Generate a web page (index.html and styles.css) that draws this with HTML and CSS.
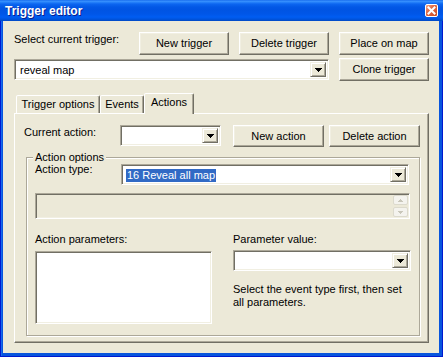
FILE: index.html
```html
<!DOCTYPE html>
<html>
<head>
<meta charset="utf-8">
<link rel="stylesheet" href="styles.css">
</head>
<body>
<div class="window">
  <div class="titlebar">
    <span class="title">Trigger editor</span>
    <span class="close"><svg width="11" height="11" viewBox="0 0 11 11"><path d="M2.5 2.5 L8.5 8.5 M8.5 2.5 L2.5 8.5" stroke="#fff" stroke-width="2" stroke-linecap="square"/></svg></span>
  </div>
  <div class="client">
    <div class="row row-top">
      <span class="label lbl-select">Select current trigger:</span>
      <button class="btn">New trigger</button>
      <button class="btn gap10">Delete trigger</button>
      <button class="btn gap10">Place on map</button>
    </div>
    <div class="row row-second">
      <div class="combo combo-trigger">
        <span class="combo-text">reveal map</span>
        <span class="drop"><svg width="7" height="4" viewBox="0 0 7 4"><path d="M0 0h7v1H0z M1 1h5v1H1z M2 2h3v1H2z M3 3h1v1H3z" fill="#000"/></svg></span>
      </div>
      <button class="btn gap10">Clone trigger</button>
    </div>
    <div class="tabs">
      <div class="tab tab-options">Trigger options</div>
      <div class="tab tab-events">Events</div>
      <div class="tab tab-actions active">Actions</div>
    </div>
    <div class="panel">
      <div class="row row-action">
        <span class="label lbl-current">Current action:</span>
        <div class="combo combo-action">
          <span class="combo-text"></span>
          <span class="drop"><svg width="7" height="4" viewBox="0 0 7 4"><path d="M0 0h7v1H0z M1 1h5v1H1z M2 2h3v1H2z M3 3h1v1H3z" fill="#000"/></svg></span>
        </div>
        <button class="btn btn-new-action">New action</button>
        <button class="btn btn-del-action">Delete action</button>
      </div>
      <fieldset class="group">
        <legend>Action options</legend>
        <div class="row row-type">
          <span class="label lbl-type">Action type:</span>
          <div class="combo combo-type">
            <span class="combo-text"><span class="sel">16 Reveal all map</span></span>
            <span class="drop"><svg width="7" height="4" viewBox="0 0 7 4"><path d="M0 0h7v1H0z M1 1h5v1H1z M2 2h3v1H2z M3 3h1v1H3z" fill="#000"/></svg></span>
          </div>
        </div>
        <div class="edit-disabled">
          <div class="spin">
            <span class="spin-btn"><svg width="5" height="3" viewBox="0 0 5 3"><path d="M2 0h1v1H2z M1 1h3v1H1z M0 2h5v1H0z" fill="#C9C7BA"/></svg></span>
            <span class="spin-btn"><svg width="5" height="3" viewBox="0 0 5 3"><path d="M0 0h5v1H0z M1 1h3v1H1z M2 2h1v1H2z" fill="#C9C7BA"/></svg></span>
          </div>
        </div>
        <div class="params">
          <div class="col col-left">
            <span class="label">Action parameters:</span>
            <div class="listbox"></div>
          </div>
          <div class="col col-right">
            <span class="label">Parameter value:</span>
            <div class="combo combo-value">
              <span class="combo-text"></span>
              <span class="drop"><svg width="7" height="4" viewBox="0 0 7 4"><path d="M0 0h7v1H0z M1 1h5v1H1z M2 2h3v1H2z M3 3h1v1H3z" fill="#000"/></svg></span>
            </div>
            <p class="hint">Select the event type first, then set all parameters.</p>
          </div>
        </div>
      </fieldset>
    </div>
  </div>
</div>
</body>
</html>
```
FILE: styles.css
```css
html, body {
  margin: 0;
  padding: 0;
  background: #ffffff;
}

.window {
  width: 443px;
  height: 357px;
  box-sizing: border-box;
  display: flex;
  flex-direction: column;
  background: #0855DD;
  box-shadow: inset 1px 0 #0019CF, inset -1px 0 #0019CF, inset 0 -1px #0019CF, inset 2px 0 #166AEE, inset -2px 0 #0855DD;
  font-family: "Liberation Sans", Arial, sans-serif;
  font-size: 11px;
  line-height: 13px;
  color: #000;
}

.titlebar {
  flex: none;
  height: 21px;
  box-sizing: border-box;
  display: flex;
  align-items: center;
  padding: 0 5px 0 5px;
  background: linear-gradient(to bottom, #0A5FE8 0px, #3D95FF 1px, #2A86FB 2px, #0C66F0 4px, #0258E6 7px, #0054E3 10px, #0056E8 14px, #005DF2 17px, #0055E0 19px, #0048C4 21px);
}

.title {
  flex: 1;
  color: #fff;
  font-weight: bold;
  font-size: 12px;
  line-height: 14px;
  padding-top: 1px;
  text-shadow: 1px 1px #0A1C8F;
}

.close {
  width: 13px;
  height: 13px;
  box-sizing: border-box;
  border: 1px solid #fff;
  border-radius: 2px;
  background: linear-gradient(135deg, #F0A58A 0%, #E06A45 40%, #CC4A22 100%);
  display: flex;
  align-items: center;
  justify-content: center;
}

.close svg {
  display: block;
}

.client {
  flex: 1;
  margin: 0 4px 4px 3px;
  background: #ECE9D8;
  padding: 11px 0 0 11px;
}

.row {
  display: flex;
  align-items: flex-start;
}

.label {
  display: block;
  white-space: nowrap;
}

.lbl-select {
  width: 125px;
  padding-top: 1px;
}

.btn {
  width: 90px;
  height: 23px;
  box-sizing: border-box;
  margin: 0;
  padding: 0;
  background: #ECE9D8;
  border: 1px solid;
  border-color: #FFFFFF #716F64 #716F64 #FFFFFF;
  box-shadow: inset -1px -1px #ACA899, inset 1px 1px #F1EFE2;
  font-family: inherit;
  font-size: 11px;
  line-height: 13px;
  color: #000;
}

.gap10 {
  margin-left: 10px;
}

.row-second {
  margin-top: 3px;
  align-items: center;
}

.combo {
  display: flex;
  height: 21px;
  box-sizing: border-box;
  border: 1px solid;
  border-color: #ACA899 #FFFFFF #FFFFFF #ACA899;
  padding: 1px;
  background: #fff;
  box-shadow: inset 1px 1px #716F64, inset -1px -1px #F1EFE2;
}

.combo-text {
  flex: 1;
  display: flex;
  align-items: center;
  padding-left: 3px;
  white-space: nowrap;
  margin: 1px 0 0 1px;
}

.drop {
  width: 16px;
  flex: none;
  box-sizing: border-box;
  border: 1px solid;
  border-color: #F1EFE2 #716F64 #716F64 #F1EFE2;
  box-shadow: inset 1px 1px #fff, inset -1px -1px #ACA899;
  background: #ECE9D8;
  display: flex;
  align-items: center;
  justify-content: center;
  margin: 1px 1px 1px 0;
}

.drop svg {
  display: block;
  margin-left: 1px;
}

.combo-trigger {
  width: 315px;
}

.tabs {
  margin-top: 12px;
  height: 20px;
  display: flex;
  align-items: flex-end;
  padding-left: 2px;
}

.tab {
  height: 18px;
  box-sizing: border-box;
  border: 1px solid;
  border-bottom: none;
  border-color: #FFFFFF #716F64 transparent #FFFFFF;
  border-radius: 2px 2px 0 0;
  box-shadow: inset -1px 0 #ACA899;
  background: #ECE9D8;
  padding-top: 2px;
  text-align: center;
  white-space: nowrap;
}

.tab-options {
  width: 84px;
}

.tab-events {
  width: 44px;
}

.tab-actions {
  width: 50px;
}

.tab.active {
  height: 21px;
  margin-bottom: -1px;
  position: relative;
  z-index: 1;
}

.panel {
  width: 415px;
  height: 230px;
  box-sizing: border-box;
  border: 1px solid;
  border-color: #FFFFFF #716F64 #716F64 #FFFFFF;
  box-shadow: inset -1px -1px #ACA899;
  padding: 11px 0 0 9px;
}

.lbl-current {
  width: 96px;
  padding-top: 1px;
}

.combo-action {
  width: 101px;
}

.btn-new-action {
  width: 91px;
  height: 22px;
  margin-left: 12px;
}

.btn-del-action {
  width: 91px;
  height: 22px;
  margin-left: 5px;
}

.group {
  margin: 4px 0 0 2px;
  width: 394px;
  box-sizing: border-box;
  min-width: 0;
  border: 1px solid #ACA899;
  box-shadow: inset 1px 1px #fff, 1px 1px #fff;
  padding: 0 8px 11px 8px;
}

.group legend {
  padding: 0 2px;
  margin-left: -2px;
  line-height: 13px;
  background: #ECE9D8;
}

.lbl-type {
  width: 86px;
  margin-top: -1px;
}

.combo-type {
  width: 288px;
}

.sel {
  background: #316AC5;
  color: #fff;
  padding: 0 1px;
  margin-left: -1px;
  line-height: 13px;
}

.edit-disabled {
  margin-top: 8px;
  width: 375px;
  height: 26px;
  box-sizing: border-box;
  border: 1px solid;
  border-color: #ACA899 #FFFFFF #FFFFFF #ACA899;
  box-shadow: inset 1px 1px #716F64, inset -1px -1px #F1EFE2;
  background: #ECE9D8;
  display: flex;
  justify-content: flex-end;
  padding: 1px 1px 1px 0;
}

.spin {
  width: 15px;
  display: flex;
  flex-direction: column;
  gap: 2px;
}

.spin-btn {
  flex: 1;
  box-sizing: border-box;
  border: 1px solid #DCDACD;
  border-radius: 2px;
  background: #F4F3EE;
  display: flex;
  align-items: center;
  justify-content: center;
}

.spin-btn svg {
  display: block;
}

.params {
  display: flex;
  margin-top: 14px;
}

.col-left {
  width: 177px;
}

.listbox {
  margin-top: 5px;
  height: 73px;
  box-sizing: border-box;
  border: 1px solid;
  border-color: #ACA899 #FFFFFF #FFFFFF #ACA899;
  box-shadow: inset 1px 1px #716F64, inset -1px -1px #F1EFE2;
  background: #fff;
}

.col-right {
  width: 178px;
  margin-left: 21px;
}

.combo-value {
  margin-top: 4px;
  width: 178px;
}

.hint {
  margin: 12px 0 0 0;
  line-height: 13px;
}
```
